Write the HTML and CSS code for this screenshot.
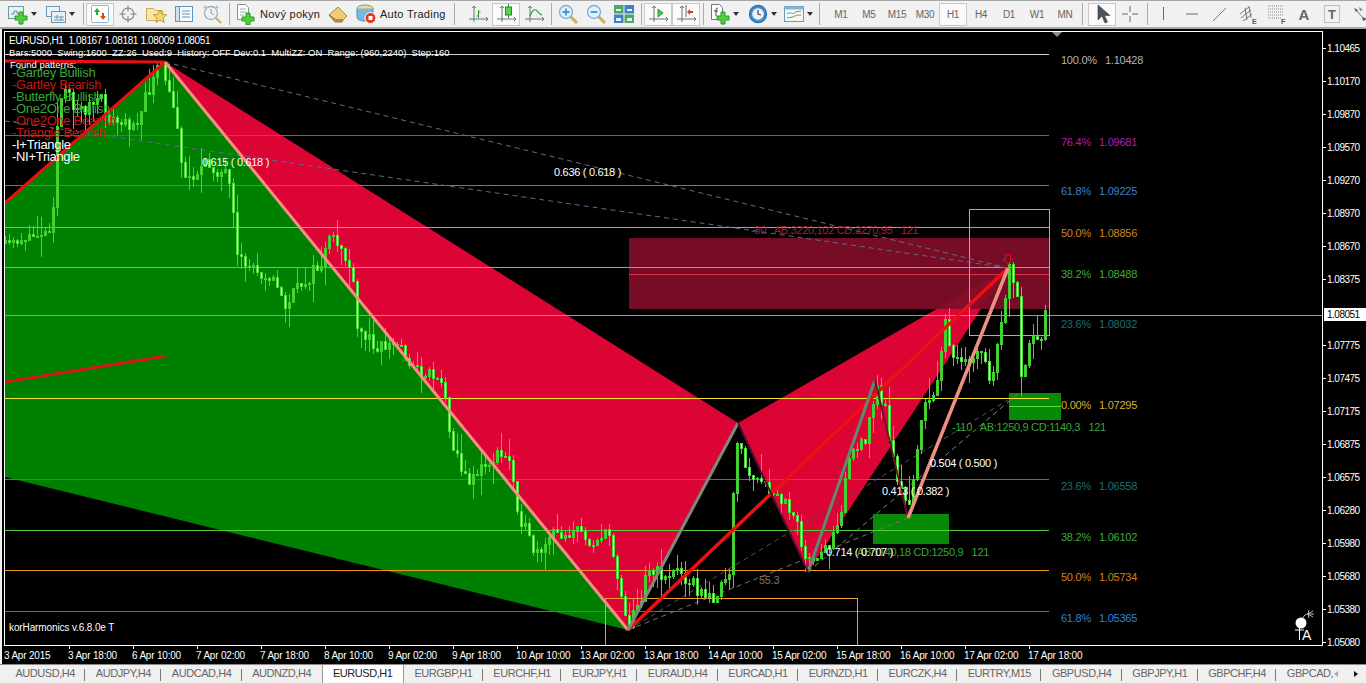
FILE: index.html
```html
<!DOCTYPE html>
<html lang="cs">
<head>
<meta charset="utf-8">
<title>EURUSD,H1</title>
<link rel="stylesheet" href="styles.css">
</head>
<body>
<header class="toolbar">
  <span class="grip g4"></span>
  <button class="btn dd"><svg class="ico" viewBox="0 0 22 22"><rect x="1.5" y="3.5" width="15" height="12" fill="#e8f3f6" stroke="#6a9cab"/><path d="M4 11h3V8h3v3h3" fill="none" stroke="#6a8a95"/><path d="M12 9h4v4h4v4h-4v4h-4v-4H8v-4h4z" fill="#4fd03a" stroke="#2a9a2a"/></svg><i class="caret"></i></button>
  <button class="btn dd"><svg class="ico" viewBox="0 0 22 22"><rect x="1.5" y="3.5" width="13" height="10" fill="#eef6fa" stroke="#6a95b8"/><rect x="6.5" y="8.5" width="14" height="11" fill="#e2f0f8" stroke="#6a95b8"/><path d="M9 14h10M9 17h10M12 12v4M16 13v5" stroke="#7a98aa" fill="none"/></svg><i class="caret"></i></button>
  <span class="sep"></span>
  <button class="btn on"><svg class="ico" viewBox="0 0 22 22"><rect x="2.5" y="2.5" width="17" height="17" rx="1" fill="#fff" stroke="#8ab8d8"/><path d="M8 5l3 4H9v3H7V9H5z" fill="#2ea82e"/><path d="M14 17l-3-4h2v-3h2v3h2z" fill="#d84a20"/></svg></button>
  <button class="btn"><svg class="ico" viewBox="0 0 22 22"><circle cx="11" cy="11" r="6" fill="none" stroke="#8a8a8a" stroke-width="1.1"/><path d="M11 2.500v6M11 13.500v6M2.500 11h6M13.500 11h6" stroke="#7a7a7a" stroke-width="1.1"/></svg></button>
  <button class="btn"><svg class="ico" viewBox="0 0 22 22"><path d="M1.5 5.5h7l2 2h7v10h-16z" fill="#f8e6a5" stroke="#c8ae60"/><path d="M15 7l2 4.300 4.500.6-3.300 3 .9 4.500L15 17.200 11 19.400l.9-4.500-3.300-3 4.500-.6z" fill="#f7d860" stroke="#b89a3a"/></svg></button>
  <button class="btn"><svg class="ico" viewBox="0 0 22 22"><rect x="2.500" y="3.500" width="17" height="15" fill="#f7fbfd" stroke="#5f95c0"/><rect x="2.500" y="3.500" width="4" height="15" fill="#cde2f2" stroke="#5f95c0"/><path d="M9 8h8M9 11h8M9 14h8" stroke="#5f95c0"/></svg></button>
  <button class="btn"><svg class="ico" viewBox="0 0 22 22"><circle cx="10" cy="10" r="6.500" fill="#eef2f5" stroke="#a0acb8" stroke-width="1.300"/><path d="M10 6v4l3 2" fill="none" stroke="#8a98a5"/><path d="M5 3l-2 2M15 3l2 2" stroke="#a0acb8" stroke-width="1.500"/><path d="M15 15l5 5" stroke="#cfae58" stroke-width="2.200"/></svg></button>
  <span class="sep"></span>
  <button class="btn wide o"><svg class="ico" viewBox="0 0 22 22"><path d="M3.500 1.500h8l3 3v12h-11z" fill="#fff" stroke="#82919c"/><path d="M6 6h6M6 9h6M6 12h4" stroke="#9aa8b5"/><path d="M12 10h4v4h4v4h-4v4h-4v-4H8v-4h4z" fill="#4fd03a" stroke="#2a9a2a"/></svg><span>Nový pokyn</span></button>
  <button class="btn"><svg class="ico" viewBox="0 0 22 22"><path d="M2 12l9-8 9 9-4 4H9z" fill="#f0cd70" stroke="#ad8535"/><path d="M2 12l7 5h7l-1 2H8z" fill="#cda550" stroke="#947430"/></svg></button>
  <button class="btn wide a"><svg class="ico" viewBox="0 0 22 22"><ellipse cx="10" cy="5.500" rx="8" ry="3.500" fill="#f2d88a" stroke="#6f9bbc"/><path d="M2 5.500v9c0 2 3.500 3.500 8 3.500s8-1.500 8-3.500v-9" fill="#7ab8e0" stroke="#5590b8"/><circle cx="15.500" cy="15" r="5.500" fill="#e23c1e" stroke="#fff"/><rect x="13.500" y="13" width="4" height="4" fill="#fff"/></svg><span>Auto Trading</span></button>
  <span class="sep"></span>
  <span class="grip g7"></span>
  <button class="btn"><svg class="ico" viewBox="0 0 22 22"><path d="M7 3v16M2 16h18M19 14l2 2-2 2M5 5l2-2 2 2" fill="none" stroke="#66756f"/><path d="M11.500 7v8M9.500 13h2M11.500 9h2" stroke="#2f9a2f" fill="none"/></svg></button>
  <button class="btn on"><svg class="ico" viewBox="0 0 22 22"><path d="M7 3v16M2 16h18M19 14l2 2-2 2M5 5l2-2 2 2" fill="none" stroke="#66756f"/><path d="M13.500 1v14" stroke="#2a8a2a"/><rect x="10.500" y="4" width="6" height="8" fill="#4fd84f" stroke="#2a8a2a"/></svg></button>
  <button class="btn"><svg class="ico" viewBox="0 0 22 22"><path d="M7 3v16M2 16h18M19 14l2 2-2 2M5 5l2-2 2 2" fill="none" stroke="#66756f"/><path d="M7 13c2-5 4-7 6-6s3 4 6 5" fill="none" stroke="#3f9a50" stroke-width="1.200"/></svg></button>
  <span class="sep"></span>
  <button class="btn"><svg class="ico" viewBox="0 0 22 22"><path d="M13 13l7 7" stroke="#cfae58" stroke-width="3"/><circle cx="9" cy="9" r="6.500" fill="#e2f2fb" stroke="#7fb2da" stroke-width="1.400"/><path d="M5.500 9h7M9 5.500v7" stroke="#4a90d0" stroke-width="1.800"/></svg></button>
  <button class="btn"><svg class="ico" viewBox="0 0 22 22"><path d="M13 13l7 7" stroke="#cfae58" stroke-width="3"/><circle cx="9" cy="9" r="6.500" fill="#e2f2fb" stroke="#7fb2da" stroke-width="1.400"/><path d="M5.500 9h7" stroke="#4a90d0" stroke-width="1.800"/></svg></button>
  <button class="btn"><svg class="ico" viewBox="0 0 22 22"><rect x="1" y="2" width="9.500" height="8.500" fill="#4fa860"/><rect x="11.500" y="2" width="9.500" height="8.500" fill="#3f80c8"/><rect x="1" y="11.500" width="9.500" height="8.500" fill="#3f80c8"/><rect x="11.500" y="11.500" width="9.500" height="8.500" fill="#4fa860"/><path d="M3 6h5v2H3zM14 6h5v2h-5zM3 15h5v3H3zM14 15h5v3h-5z" fill="#e8f2f8"/></svg></button>
  <span class="sep"></span>
  <button class="btn on"><svg class="ico" viewBox="0 0 22 22"><path d="M7 3v16M2 16h18M19 14l2 2-2 2M5 5l2-2 2 2" fill="none" stroke="#66756f"/><path d="M11 6l5 4-5 4z" fill="#4ac84a" stroke="#2a9a2a"/></svg></button>
  <button class="btn on"><svg class="ico" viewBox="0 0 22 22"><path d="M7 3v16M2 16h18M19 14l2 2-2 2M5 5l2-2 2 2" fill="none" stroke="#66756f"/><path d="M11 2v12" stroke="#66707a"/><path d="M18 8h-3V6l-3 3 3 3v-2h3z" fill="#c8401e"/></svg></button>
  <span class="sep"></span>
  <button class="btn dd"><svg class="ico" viewBox="0 0 22 22"><path d="M2.500 1.500h8l3 3v12h-11z" fill="#fff" stroke="#6a7a80"/><path d="M9 5c-2 0-2 1-2 3v5M5 8h4" fill="none" stroke="#444"/><path d="M12 9h4v4h4v4h-4v4h-4v-4H8v-4h4z" fill="#4fd03a" stroke="#2a9a2a"/></svg><i class="caret"></i></button>
  <button class="btn dd n"><svg class="ico" viewBox="0 0 22 22"><circle cx="11" cy="11" r="8.500" fill="#3f8fd0" stroke="#2f70a8" stroke-width="1.400"/><circle cx="11" cy="11" r="5.800" fill="#f0f4f8"/><path d="M11 7v4l3 1" fill="none" stroke="#444" stroke-width="1.200"/></svg><i class="caret"></i></button>
  <button class="btn dd n"><svg class="ico" viewBox="0 0 22 22"><rect x="1.500" y="3.500" width="19" height="15" fill="#f2f8f8" stroke="#6a9ab5"/><rect x="1.500" y="3.500" width="19" height="3" fill="#85b5d0"/><path d="M4 11c3-3 5 1 7-1s4-1 7-2M4 15c3-1 5 0 8-2s4 0 6-1" fill="none" stroke="#7a9a6a"/></svg><i class="caret"></i></button>
  <span class="sep"></span>
  <span class="grip g5"></span>
  <button class="btn tf">M1</button><button class="btn tf">M5</button><button class="btn tf">M15</button><button class="btn tf">M30</button><button class="btn tf on">H1</button><button class="btn tf">H4</button><button class="btn tf">D1</button><button class="btn tf">W1</button><button class="btn tf">MN</button>
  <span class="sep"></span>
  <span class="grip g3"></span>
  <button class="btn on"><svg class="ico" viewBox="0 0 22 22"><path d="M7 2v15l4-4 3 7 2.500-1-3-6.500H19z" fill="#4a5560" stroke="#333d45" stroke-width=".6"/></svg></button>
  <button class="btn"><svg class="ico" viewBox="0 0 22 22"><path d="M11 3v6M11 13v6M3 11h6M13 11h6" stroke="#666" stroke-width="1"/></svg></button>
  <span class="sep"></span>
  <button class="btn"><svg class="ico" viewBox="0 0 22 22"><path d="M10.500 4v13" stroke="#666" stroke-width="1"/></svg></button>
  <button class="btn"><svg class="ico" viewBox="0 0 22 22"><path d="M5 11h12" stroke="#666" stroke-width="1"/></svg></button>
  <button class="btn"><svg class="ico" viewBox="0 0 22 22"><path d="M4 18L17 5" stroke="#777" stroke-width="1"/></svg></button>
  <button class="btn"><svg class="ico" viewBox="0 0 22 22"><path d="M3 11l9-7M4 15l10-8M6 18l9-7M8 5l2 12M12 3l2 12" stroke="#777" fill="none"/><text class="ico-l" x="15" y="21">E</text></svg></button>
  <button class="btn"><svg class="ico" viewBox="0 0 22 22"><path d="M3 3h15M3 6h15M3 9h15M3 12h15M3 15h13" stroke="#888" stroke-dasharray="1 1"/><text class="ico-l" x="16" y="21">F</text></svg></button>
  <button class="btn tx">A</button>
  <button class="btn"><svg class="ico" viewBox="0 0 22 22"><rect x="3.500" y="2.500" width="15" height="17" fill="none" stroke="#888" stroke-dasharray="1 1"/><text class="ico-t" x="11" y="16">T</text></svg></button>
  <button class="btn"><svg class="ico" viewBox="0 0 22 22"><path d="M5 5l4 2-2 2zM13 14l5 2-4 2z" fill="#555"/><path d="M8 8l6 7" stroke="#777"/><path d="M10 4l4 3-3 1z" fill="#888"/></svg></button>
</header>

<main class="terminal">
  <div class="chart-row">
    <div class="plot">
      <svg class="canvas" viewBox="5 32 1317 613" width="1317" height="613">
        <polygon points="5,203 165,62 628,630 5,477" fill="#008000"/>
        <polygon points="165,62 738,423 628,630" fill="#dc0335"/>
        <polygon points="738,423 1008,268 808,572" fill="#dc0335"/>
        <rect x="629" y="238" width="420" height="71" fill="#800d2a" fill-opacity=".93"/>
        <rect x="873" y="514" width="76" height="30" fill="#078a07"/>
        <rect x="1009" y="393" width="52" height="27" fill="#078a07"/>
        <g fill="none" stroke-width="1" shape-rendering="crispEdges">
          <path d="M5 54.500H1049" stroke="#d0d0d0"/>
          <path d="M5 135.500H1049" stroke="#d020c8"/>
          <path d="M5 185.500H1049" stroke="#3a80e0"/>
          <path d="M5 227.500H1049" stroke="#f09a10"/>
          <path d="M5 267.500H1049" stroke="#74c830"/>
          <path d="M629 274.500H1049" stroke="#e03050"/>
          <path d="M5 315.500H1322" stroke="#8a9ca6"/>
          <path d="M5 398.500H1049" stroke="#f5e530"/>
          <path d="M5 479.500H1049" stroke="#208890"/>
          <path d="M5 530.500H1049" stroke="#50d030"/>
          <path d="M5 570.500H1049" stroke="#f09a20"/>
          <path d="M5 611.500H1049" stroke="#3a70e0"/>
          <path d="M1009 406.500H1061" stroke="#50e040"/>
          <rect x="969.500" y="209.500" width="80" height="126" stroke="#f0a030"/>
          <path d="M605.500 645V598.500H857.500V645" stroke="#f0a030"/>
        </g>
        <g fill="none" stroke-dasharray="5 4" stroke-width="1">
          <path d="M165 62L1008 268" stroke="#6a6a78"/>
          <path d="M5 121L1008 268" stroke="#5a6a90"/>
          <path d="M628 630L908 518" stroke="#6a7a6a"/>
          <path d="M808 572L1020 392" stroke="#7a8a7a"/>
          <path d="M628 630L1008 400" stroke="#555"/>
        </g>
        <g id="candles"></g>
        <g fill="none" stroke-linecap="butt">
          <path d="M5 61L165 62" stroke="#e81010" stroke-width="3"/>
          <path d="M5 203L165 62" stroke="#e81010" stroke-width="3"/>
          <path d="M5 382L166 356" stroke="#d81818" stroke-width="3"/>
          <path d="M165 62L628 630" stroke="#f09080" stroke-width="3"/>
          <path d="M628 630L1008 268" stroke="#ee0f10" stroke-width="3.500"/>
          <path d="M628 630L738 423" stroke="#80887c" stroke-width="3"/>
          <path d="M808 572L875 380" stroke="#5f8a70" stroke-width="3"/>
          <path d="M738 423L808 572" stroke="#4a1030" stroke-width="2"/>
          <path d="M875 380L908 518" stroke="#701028" stroke-width="2"/>
          <path d="M908 518L1008 268" stroke="#f09080" stroke-width="3.500"/>
        </g>
        <path d="M1005.500 254.500h5v5h2.500l-5 5-5-5h2.500z" fill="none" stroke="#e01020"/>
        <path d="M1052 32h10l-5 5z" fill="#7f8f9f"/>

        <text class="tx-h w" x="9" y="44">EURUSD,H1  1.08167 1.08181 1.08009 1.08051</text>
        <text class="tx-xs w" x="9" y="56">Bars:5000  Swing:1600  ZZ:26  Used:9  History: OFF Dev:0.1  MultiZZ: ON  Range: (960,2240)  Step:160</text>
        <text class="tx-xs w" x="10" y="68">Found patterns:</text>
        <text class="tx-l gr" x="12" y="77">-Gartley Bullish</text>
        <text class="tx-l rd" x="12" y="89">-Gartley Bearish</text>
        <text class="tx-l gr" x="12" y="101">-Butterfly Bullish</text>
        <text class="tx-l gr" x="12" y="113">-One2One Bullish</text>
        <text class="tx-l rd" x="12" y="125">-One2One Bearish</text>
        <text class="tx-l rd" x="12" y="137">-Triangle Bearish</text>
        <text class="tx-l w" x="12" y="149">-I+Triangle</text>
        <text class="tx-l w" x="12" y="161">-NI+Triangle</text>

        <text class="tx-m w" x="202" y="166">0.615 ( 0.618 )</text>
        <text class="tx-m w" x="554" y="176">0.636 ( 0.618 )</text>
        <text class="tx-m dr" x="751" y="234">-80   AB:3220,102 CD:3270,95   121</text>
        <text class="tx-m gr" x="952" y="431">-110   AB:1250,9 CD:1140,3   121</text>
        <text class="tx-m w" x="930" y="467">0.504 ( 0.500 )</text>
        <text class="tx-m w" x="882" y="495">0.413 ( 0.382 )</text>
        <text class="tx-m gr" x="857" y="556">AB:1140,18 CD:1250,9   121</text>
        <text class="tx-m w" x="826" y="556">0.714 ( 0.707 )</text>
        <text class="tx-m gy" x="759" y="584">55.3</text>
        <text class="tx-s w" x="9" y="631">korHarmonics v.6.8.0e T</text>

        <text class="tx-f f100" x="1061" y="64">100.0%</text><text class="tx-f f100" x="1105" y="64">1.10428</text>
        <text class="tx-f f76" x="1061" y="146">76.4%</text><text class="tx-f f76" x="1099" y="146">1.09681</text>
        <text class="tx-f f61" x="1061" y="195">61.8%</text><text class="tx-f f61" x="1099" y="195">1.09225</text>
        <text class="tx-f f50" x="1061" y="237">50.0%</text><text class="tx-f f50" x="1099" y="237">1.08856</text>
        <text class="tx-f f38" x="1061" y="278">38.2%</text><text class="tx-f f38" x="1099" y="278">1.08488</text>
        <text class="tx-f f23" x="1061" y="328">23.6%</text><text class="tx-f f23" x="1099" y="328">1.08032</text>
        <text class="tx-f f0" x="1061" y="409">0.00%</text><text class="tx-f f0" x="1099" y="409">1.07295</text>
        <text class="tx-f f23" x="1061" y="490">23.6%</text><text class="tx-f f23" x="1099" y="490">1.06558</text>
        <text class="tx-f f38" x="1061" y="541">38.2%</text><text class="tx-f f38" x="1099" y="541">1.06102</text>
        <text class="tx-f f50" x="1061" y="581">50.0%</text><text class="tx-f f50" x="1099" y="581">1.05734</text>
        <text class="tx-f f61" x="1061" y="622">61.8%</text><text class="tx-f f61" x="1099" y="622">1.05365</text>

        <g>
          <circle cx="1301" cy="623" r="5.500" fill="#fff"/>
          <path d="M1303 618c1-3 3-4 5-4M1308 614l5-3M1308 614l6 0M1308 614l5 3M1308 614l1-4M1308 614l1 4" stroke="#ddd" fill="none" stroke-width=".8"/>
          <path d="M1295 630h9M1299.500 628v12" stroke="#fff"/>
          <text class="tx-ta w" x="1302" y="640">A</text>
        </g>
      </svg>
    </div>
    <aside class="price-axis">
      <span>1.10465</span><span>1.10170</span><span>1.09870</span><span>1.09570</span><span>1.09270</span><span>1.08970</span><span>1.08670</span><span>1.08375</span><span></span><span>1.07775</span><span>1.07475</span><span>1.07175</span><span>1.06875</span><span>1.06575</span><span>1.06280</span><span>1.05980</span><span>1.05680</span><span>1.05380</span><span>1.05080</span>
      <b class="price-now">1.08051</b>
    </aside>
  </div>
  <div class="time-axis">
    <span>3 Apr 2015</span><span>3 Apr 18:00</span><span>6 Apr 10:00</span><span>7 Apr 02:00</span><span>7 Apr 18:00</span><span>8 Apr 10:00</span><span>9 Apr 02:00</span><span>9 Apr 18:00</span><span>10 Apr 10:00</span><span>13 Apr 02:00</span><span>13 Apr 18:00</span><span>14 Apr 10:00</span><span>15 Apr 02:00</span><span>15 Apr 18:00</span><span>16 Apr 10:00</span><span>17 Apr 02:00</span><span>17 Apr 18:00</span>
  </div>
</main>

<nav class="tabbar">
  <div class="tabs">
    <a>AUDUSD,H4</a><a>AUDJPY,H4</a><a>AUDCAD,H4</a><a class="pre">AUDNZD,H4</a><a class="active">EURUSD,H1</a><a>EURGBP,H1</a><a>EURCHF,H1</a><a>EURJPY,H1</a><a>EURAUD,H4</a><a>EURCAD,H1</a><a>EURNZD,H1</a><a>EURCZK,H4</a><a>EURTRY,M15</a><a>GBPUSD,H4</a><a>GBPJPY,H1</a><a>GBPCHF,H4</a><a class="pre last">GBPCAD,</a>
  </div>
  <div class="arrows"><i class="al"></i><i class="ar"></i></div>
</nav>
<script src="chart.js"></script>
</body>
</html>
```
FILE: styles.css
```css
* { box-sizing: border-box; }
html, body { margin: 0; height: 683px; overflow: hidden; }
body {
  width: 1366px;
  display: flex;
  flex-direction: column;
  background: #f0f0f0;
  font-family: "Liberation Sans", Arial, sans-serif;
}

/* toolbar */
.toolbar {
  height: 29px;
  flex: none;
  display: flex;
  align-items: center;
  overflow: hidden;
  background: #f1f1f1;
  border-top: 1px solid #a6a6a6;
  border-bottom: 2px solid #a8a8a8;
}
.grip {
  flex: none;
  height: 20px;
  background-image: radial-gradient(#9a9a9a 40%, transparent 45%);
  background-size: 2px 2px;
  background-repeat: repeat;
}
.g4 { width: 4px; }
.g7 { width: 4px; margin: 0 0 0 3px; }
.g5 { width: 4px; margin-left: 1px; }
.g3 { width: 3px; }
.sep { flex: none; width: 1px; height: 22px; margin: 0 2px 0 3px; background: #ababab; }
.btn {
  flex: none;
  width: 28px;
  height: 23px;
  padding: 0;
  border: 1px solid transparent;
  background: transparent;
  display: flex;
  align-items: center;
  justify-content: center;
  font: 11px "Liberation Sans", Arial, sans-serif;
  color: #444;
}
.btn.on { background: #fafafa; border-color: #c9c9c9; }
.ico { width: 22px; height: 22px; flex: none; display: block; }
.dd { width: 38px; justify-content: flex-start; padding-left: 2px; gap: 1px; }
.dd.n { width: 36px; }
.caret { width: 0; height: 0; margin-left: 1px; border: 3.5px solid transparent; border-top: 4px solid #333; border-bottom: 0; }
.wide { justify-content: flex-start; letter-spacing: .28px; color: #222; }
.wide span { white-space: nowrap; }
.wide.o { width: 92px; padding-left: 1px; gap: 4px; }
.wide.a { width: 99px; padding-left: 2px; gap: 3px; }
.tf { font-size: 10px; letter-spacing: -.3px; color: #666; }
.tx { font-size: 15px; font-weight: 700; color: #666; }
.ico-l { font: 700 7px "Liberation Sans", Arial, sans-serif; fill: #555; }
.ico-t { font: 700 13px "Liberation Sans", Arial, sans-serif; fill: #666; text-anchor: middle; }

/* chart */
.terminal {
  height: 635px;
  flex: none;
  margin-left: 2px;
  padding: 2px 0 0 2px;
  background: #000;
  color: #fff;
  font-size: 10px;
  letter-spacing: -.3px;
}
.chart-row { display: flex; height: 615px; }
.plot {
  flex: none;
  width: 1319px;
  height: 615px;
  border: 1px solid #fff;
  background: #000;
  overflow: hidden;
}
.canvas { display: block; }
.canvas text { white-space: pre; font-family: "Liberation Sans", Arial, sans-serif; }
.tx-h  { font-size: 10px; letter-spacing: -.36px; }
.tx-s  { font-size: 10px; letter-spacing: -.12px; }
.tx-xs { font-size: 9.5px; letter-spacing: -.02px; }
.tx-l  { font-size: 13px; }
.tx-m  { font-size: 11px; }
.tx-f  { font-size: 11px; letter-spacing: -.25px; }
.tx-ta { font-size: 14px; }
.w  { fill: #fff; }
.gr { fill: #3aa53a; }
.rd { fill: #c01818; }
.dr { fill: #a3202f; }
.gy { fill: #777; }
.f100 { fill: #b4b4b4; }
.f76 { fill: #b01fb0; }
.f61 { fill: #3a7fd5; }
.f50 { fill: #d08020; }
.f38 { fill: #3fa83f; }
.f23 { fill: #1f6f70; }
.f0  { fill: #d8b030; }

.price-axis {
  position: relative;
  flex: 1;
  display: grid;
  grid-auto-rows: 33px;
  padding-top: 1px;
  height: 615px;
}
.price-axis span {
  display: flex;
  align-items: center;
  padding-left: 4px;
  position: relative;
  letter-spacing: -.5px;
}
.price-axis span:not(:empty)::before {
  content: "";
  position: absolute;
  left: 0;
  top: 16px;
  width: 3px;
  height: 1px;
  background: #fff;
}
.price-now {
  position: absolute;
  left: 1px;
  top: 277px;
  width: 42px;
  height: 13px;
  padding-left: 3px;
  line-height: 13px;
  background: #fff;
  color: #000;
  font-weight: 400;
  letter-spacing: -.5px;
}

.time-axis { display: flex; height: 18px; }
.time-axis span {
  flex: none;
  width: 64px;
  padding: 4px 0 0 0;
  position: relative;
  white-space: nowrap;
  letter-spacing: -.2px;
}
.time-axis span:not(:first-child)::before {
  content: "";
  position: absolute;
  left: 1px;
  top: 0;
  width: 1px;
  height: 3px;
  background: #fff;
}

/* tabs */
.tabbar {
  flex: 1;
  display: flex;
  align-items: stretch;
  background: #f0f0f0;
  border-top: 1px solid #8a8a8a;
  font-size: 11px;
  letter-spacing: -.45px;
  color: #666;
}
.tabs { display: flex; flex: none; width: 1334px; overflow: hidden; padding-left: 5px; }
.tabs a {
  flex: none;
  position: relative;
  padding: 2px 10.450px 0;
  white-space: nowrap;
}
.tabs a.last { padding-right: 0; }
.tabs a:not(.active):not(.pre)::after {
  content: "";
  position: absolute;
  right: 0;
  top: 4px;
  width: 1px;
  height: 12px;
  background: #777;
}
.tabs a.active {
  background: #fff;
  color: #222;
  border: 1px solid #9a9a9a;
  border-width: 0 1px;
}
.arrows { flex: 1; display: flex; align-items: center; justify-content: space-between; padding: 0 8px 0 0; }
.al, .ar { width: 0; height: 0; border: 3.5px solid transparent; }
.al { border-right: 4px solid #aaa; border-left: 0; }
.ar { border-left: 4px solid #111; border-right: 0; }
```
FILE: chart.js
```js
(function () {
  var way = [[5,243],[20,240],[50,230],[55,180],[58,100],[66,95],[80,110],[100,100],[110,120],[125,125],[140,115],[150,85],[158,68],[163,70],[170,100],[178,125],[183,180],[195,172],[210,165],[225,175],[232,200],[235,260],[250,265],[270,275],[285,305],[300,285],[320,265],[330,240],[340,245],[352,275],[356,330],[372,340],[380,345],[400,345],[415,370],[440,375],[452,440],[465,480],[480,470],[497,455],[510,460],[518,510],[530,545],[540,560],[550,535],[575,530],[590,540],[610,535],[620,590],[628,625],[640,600],[645,570],[665,575],[680,570],[690,580],[705,600],[720,590],[730,575],[735,450],[738,430],[745,470],[760,485],[780,500],[795,510],[805,560],[815,565],[830,540],[840,510],[850,450],[865,445],[875,385],[885,410],[895,470],[908,515],[920,420],[935,390],[945,315],[950,360],[965,365],[980,350],[992,385],[1000,330],[1008,268],[1018,305],[1020,385],[1030,345],[1040,340],[1047,300]];
  var seed = 11;
  function rnd() { seed = (seed * 16807) % 2147483647; return seed / 2147483647; }
  function at(x) {
    for (var k = 1; k < way.length; k++) {
      if (x <= way[k][0]) {
        var a = way[k - 1], b = way[k];
        return a[1] + (b[1] - a[1]) * (x - a[0]) / (b[0] - a[0]);
      }
    }
    return way[way.length - 1][1];
  }
  var wick = "", bull = "", bear = "", prev = at(5);
  for (var x = 5; x <= 1047; x += 4) {
    var amp = x < 50 ? 6 : 16;
    var close = Math.round(at(x) + (rnd() - .5) * amp);
    var open = Math.round(prev);
    var hi = Math.min(open, close) - Math.round(rnd() * rnd() * 26);
    var lo = Math.max(open, close) + Math.round(rnd() * rnd() * 26);
    if (x < 170) { hi = Math.max(hi, 63); }
    wick += "M" + (x + .5) + " " + hi + "V" + lo;
    var top = Math.min(open, close), h = Math.max(Math.abs(close - open), 1);
    var r = "M" + (x - .5) + " " + (top + .5) + "h2v" + h + "h-2z";
    if (close < open) { bull += r; } else { bear += r; }
    prev = close;
  }
  var ns = "http://www.w3.org/2000/svg", g = document.getElementById("candles");
  [[wick, "none", "#4fd03a"], [bull, "none", "#3fd02f"], [bear, "#c8ffb8", "#46d835"]].forEach(function (p) {
    var el = document.createElementNS(ns, "path");
    el.setAttribute("d", p[0]);
    el.setAttribute("fill", p[1]);
    el.setAttribute("stroke", p[2]);
    el.setAttribute("shape-rendering", "crispEdges");
    g.appendChild(el);
  });
})();
```
